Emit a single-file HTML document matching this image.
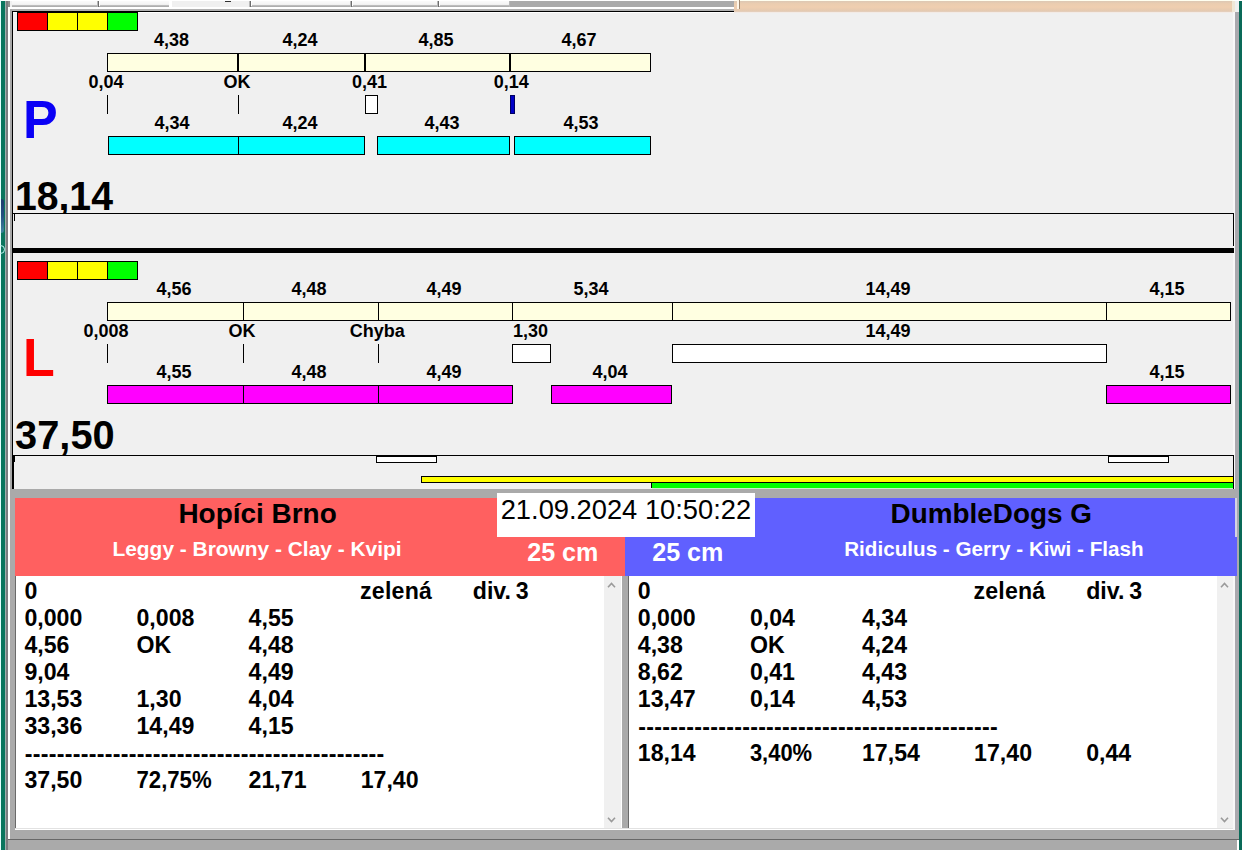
<!DOCTYPE html>
<html><head><meta charset="utf-8"><title>Flyball</title>
<style>
html,body{margin:0;padding:0;}
body{width:1242px;height:850px;overflow:hidden;background:#f0f0f0;position:relative;font-family:"Liberation Sans",sans-serif;}
.a{position:absolute;box-sizing:border-box;}
.t{white-space:pre;}
</style></head><body>
<div class="a" style="left:0px;top:0px;width:1242px;height:1px;background:#ffffff;"></div>
<div class="a" style="left:734px;top:0px;width:499px;height:1px;background:#fffff0;"></div>
<div class="a" style="left:12px;top:1px;width:498px;height:5px;background:linear-gradient(#fafafa,#f4f4f4 60%,#e6e6e6);"></div>
<div class="a" style="left:12px;top:5px;width:498px;height:2px;background:linear-gradient(#c4c4c4,#a6a6a6);"></div>
<div class="a" style="left:170px;top:1px;width:80px;height:6px;background:#f0f0f0;"></div>
<div class="a" style="left:169px;top:1px;width:3px;height:6px;background:#ffffff;"></div>
<div class="a" style="left:225px;top:1px;width:6px;height:1px;background:#303030;"></div>
<div class="a" style="left:97px;top:1px;width:1px;height:6px;background:#b8b8b8;"></div>
<div class="a" style="left:98px;top:1px;width:1px;height:6px;background:#6c6c6c;"></div>
<div class="a" style="left:99px;top:1px;width:1px;height:5px;background:#ffffff;"></div>
<div class="a" style="left:249px;top:1px;width:1px;height:6px;background:#b8b8b8;"></div>
<div class="a" style="left:250px;top:1px;width:1px;height:6px;background:#6c6c6c;"></div>
<div class="a" style="left:251px;top:1px;width:1px;height:5px;background:#ffffff;"></div>
<div class="a" style="left:350px;top:1px;width:1px;height:6px;background:#b8b8b8;"></div>
<div class="a" style="left:351px;top:1px;width:1px;height:6px;background:#6c6c6c;"></div>
<div class="a" style="left:352px;top:1px;width:1px;height:5px;background:#ffffff;"></div>
<div class="a" style="left:437px;top:1px;width:1px;height:6px;background:#b8b8b8;"></div>
<div class="a" style="left:438px;top:1px;width:1px;height:6px;background:#6c6c6c;"></div>
<div class="a" style="left:439px;top:1px;width:1px;height:5px;background:#ffffff;"></div>
<div class="a" style="left:509px;top:1px;width:1px;height:6px;background:#b8b8b8;"></div>
<div class="a" style="left:510px;top:1px;width:1px;height:6px;background:#6c6c6c;"></div>
<div class="a" style="left:511px;top:1px;width:1px;height:5px;background:#ffffff;"></div>
<div class="a" style="left:510px;top:1px;width:224px;height:6px;background:#aaaaaa;"></div>
<div class="a" style="left:8px;top:7px;width:726px;height:2px;background:#ffffff;"></div>
<div class="a" style="left:10px;top:9px;width:724px;height:2px;background:#b0b0b0;"></div>
<div class="a" style="left:12px;top:11px;width:722px;height:1px;background:#000000;"></div>
<div class="a" style="left:13px;top:12px;width:721px;height:1px;background:#ffffff;"></div>
<div class="a" style="left:734px;top:1px;width:499px;height:11px;background:linear-gradient(#dcc8b4 0%,#ebcdb0 25%,#efcfb0 55%,#e6cab0 85%,#e4d0c0 100%);"></div>
<div class="a" style="left:734px;top:12px;width:499px;height:1px;background:#f3ebe6;"></div>
<div class="a" style="left:737px;top:0px;width:2px;height:9px;background:#fff6e8;"></div>
<div class="a" style="left:739px;top:0px;width:1px;height:9px;background:#a08870;"></div>
<div class="a" style="left:1232px;top:1px;width:3px;height:11px;background:#f0e8d8;"></div>
<div class="a" style="left:0px;top:0px;width:1px;height:850px;background:#e6ffff;"></div>
<div class="a" style="left:1px;top:1px;width:4px;height:849px;background:#0a755e;"></div>
<div class="a" style="left:5px;top:1px;width:1px;height:849px;background:#9fb0ae;"></div>
<div class="a" style="left:6px;top:1px;width:2px;height:849px;background:#7c7c80;"></div>
<div class="a" style="left:8px;top:7px;width:2px;height:832px;background:#ffffff;"></div>
<div class="a" style="left:8px;top:1px;width:2px;height:6px;background:#909090;"></div>
<div class="a" style="left:10px;top:9px;width:2px;height:480px;background:#a8a8a8;"></div>
<div class="a" style="left:12px;top:11px;width:1px;height:478px;background:#000000;"></div>
<div class="a" style="left:1px;top:199px;width:3px;height:34px;background:linear-gradient(#22306e,#2a4a88 50%,#4a88a8);border-radius:0 3px 3px 0;opacity:.85;"></div>
<div class="a" style="left:-4px;top:245px;width:9px;height:9px;border:1px solid #bff4f0;border-radius:50%;"></div>
<div class="a" style="left:1233px;top:12px;width:2px;height:838px;background:#f8f8f8;"></div>
<div class="a" style="left:1235px;top:12px;width:4px;height:838px;background:#a9a9ae;"></div>
<div class="a" style="left:1239px;top:1px;width:3px;height:849px;background:#0a6a58;"></div>
<div class="a" style="left:17px;top:12px;width:121px;height:19px;background:#000;"></div>
<div class="a" style="left:18px;top:13px;width:29px;height:17px;background:#ff0000;"></div>
<div class="a" style="left:48px;top:13px;width:29px;height:17px;background:#ffff00;"></div>
<div class="a" style="left:78px;top:13px;width:29px;height:17px;background:#ffff00;"></div>
<div class="a" style="left:108px;top:13px;width:29px;height:17px;background:#00ff00;"></div>
<div class="a" style="left:107px;top:53px;width:544px;height:19px;background:#ffffe1;border:1px solid #000;"></div>
<div class="a" style="left:237px;top:53px;width:2px;height:19px;background:#000;"></div>
<div class="a" style="left:364px;top:53px;width:2px;height:19px;background:#000;"></div>
<div class="a" style="left:509px;top:53px;width:2px;height:19px;background:#000;"></div>
<div class="a" style="left:107px;top:95px;width:1px;height:19px;background:#000;"></div>
<div class="a" style="left:238px;top:95px;width:1px;height:19px;background:#000;"></div>
<div class="a" style="left:365px;top:95px;width:13px;height:19px;background:#fff;border:1px solid #000;"></div>
<div class="a" style="left:510px;top:95px;width:5px;height:19px;background:#0000c8;border:1px solid #000060;"></div>
<div class="a" style="left:108px;top:136px;width:257px;height:19px;background:#00ffff;border:1px solid #000;"></div>
<div class="a" style="left:238px;top:136px;width:1px;height:19px;background:#000;"></div>
<div class="a" style="left:377px;top:136px;width:133px;height:19px;background:#00ffff;border:1px solid #000;"></div>
<div class="a" style="left:514px;top:136px;width:137px;height:19px;background:#00ffff;border:1px solid #000;"></div>
<div class="a" style="left:13px;top:213px;width:1221px;height:1px;background:#000;"></div>
<div class="a" style="left:1233px;top:213px;width:1px;height:33px;background:#000;"></div>
<div class="a" style="left:14px;top:214px;width:1px;height:7px;background:#000;"></div>
<div class="a" style="left:13px;top:248px;width:1221px;height:5px;background:#000;"></div>
<div class="a" style="left:17px;top:261px;width:121px;height:19px;background:#000;"></div>
<div class="a" style="left:18px;top:262px;width:29px;height:17px;background:#ff0000;"></div>
<div class="a" style="left:48px;top:262px;width:29px;height:17px;background:#ffff00;"></div>
<div class="a" style="left:78px;top:262px;width:29px;height:17px;background:#ffff00;"></div>
<div class="a" style="left:108px;top:262px;width:29px;height:17px;background:#00ff00;"></div>
<div class="a" style="left:107px;top:302px;width:1124px;height:19px;background:#ffffe1;border:1px solid #000;"></div>
<div class="a" style="left:243px;top:302px;width:1px;height:19px;background:#000;"></div>
<div class="a" style="left:378px;top:302px;width:1px;height:19px;background:#000;"></div>
<div class="a" style="left:512px;top:302px;width:1px;height:19px;background:#000;"></div>
<div class="a" style="left:672px;top:302px;width:1px;height:19px;background:#000;"></div>
<div class="a" style="left:1106px;top:302px;width:1px;height:19px;background:#000;"></div>
<div class="a" style="left:107px;top:344px;width:1px;height:19px;background:#000;"></div>
<div class="a" style="left:243px;top:344px;width:1px;height:19px;background:#000;"></div>
<div class="a" style="left:378px;top:344px;width:1px;height:19px;background:#000;"></div>
<div class="a" style="left:512px;top:344px;width:39px;height:19px;background:#fff;border:1px solid #000;"></div>
<div class="a" style="left:672px;top:344px;width:435px;height:19px;background:#fff;border:1px solid #000;"></div>
<div class="a" style="left:107px;top:385px;width:406px;height:19px;background:#ff00ff;border:1px solid #000;"></div>
<div class="a" style="left:243px;top:385px;width:1px;height:19px;background:#000;"></div>
<div class="a" style="left:378px;top:385px;width:1px;height:19px;background:#000;"></div>
<div class="a" style="left:551px;top:385px;width:121px;height:19px;background:#ff00ff;border:1px solid #000;"></div>
<div class="a" style="left:1106px;top:385px;width:125px;height:19px;background:#ff00ff;border:1px solid #000;"></div>
<div class="a" style="left:13px;top:455px;width:1221px;height:1px;background:#000;"></div>
<div class="a" style="left:13px;top:455px;width:1px;height:34px;background:#000;"></div>
<div class="a" style="left:1233px;top:455px;width:1px;height:34px;background:#000;"></div>
<div class="a" style="left:14px;top:456px;width:1px;height:6px;background:#000;"></div>
<div class="a" style="left:376px;top:455px;width:61px;height:8px;background:#fff;border:1px solid #000;border-top-width:2px;"></div>
<div class="a" style="left:1108px;top:455px;width:61px;height:8px;background:#fff;border:1px solid #000;border-top-width:2px;"></div>
<div class="a" style="left:421px;top:476px;width:813px;height:7px;background:#ffff00;border:1px solid #000;"></div>
<div class="a" style="left:651px;top:482px;width:583px;height:6px;background:#00ff00;border:1px solid #000;border-bottom:none;"></div>
<div class="a" style="left:652px;top:488px;width:581px;height:1px;background:#c8f0c8;"></div>
<div class="a" style="left:8px;top:489px;width:1227px;height:9px;background:#aaaaaa;"></div>
<div class="a" style="left:8px;top:489px;width:2px;height:350px;background:#ffffff;"></div>
<div class="a" style="left:10px;top:489px;width:5px;height:350px;background:#aaaaaa;"></div>
<div class="a" style="left:15px;top:498px;width:610px;height:78px;background:#ff6060;"></div>
<div class="a" style="left:625px;top:498px;width:610px;height:39px;background:#6060ff;"></div>
<div class="a" style="left:625px;top:537px;width:612px;height:39px;background:#6060ff;"></div>
<div class="a" style="left:1235px;top:498px;width:2px;height:39px;background:#d4d4e4;"></div>
<div class="a" style="left:497px;top:493px;width:258px;height:44px;background:#ffffff;"></div>
<div class="a" style="left:15px;top:576px;width:607px;height:252px;background:#ffffff;"></div>
<div class="a" style="left:15px;top:576px;width:1px;height:252px;background:#6a6a6a;"></div>
<div class="a" style="left:604px;top:576px;width:17px;height:252px;background:#f0f0f0;"></div>
<div class="a" style="left:622px;top:576px;width:6px;height:263px;background:#aaaaaa;"></div>
<div class="a" style="left:628px;top:576px;width:1px;height:252px;background:#6a6a6a;"></div>
<div class="a" style="left:629px;top:576px;width:604px;height:252px;background:#ffffff;"></div>
<div class="a" style="left:1217px;top:576px;width:16px;height:252px;background:#f0f0f0;"></div>
<svg class="a" style="left:0;top:0" width="1242" height="850"><path d="M608.0 587.3 L611.5 583.5 L615.0 587.3" fill="none" stroke="#9a9a9a" stroke-width="1.6"/></svg>
<svg class="a" style="left:0;top:0" width="1242" height="850"><path d="M608.0 817.8 L611.5 821.5999999999999 L615.0 817.8" fill="none" stroke="#9a9a9a" stroke-width="1.6"/></svg>
<svg class="a" style="left:0;top:0" width="1242" height="850"><path d="M1221.0 587.3 L1224.5 583.5 L1228.0 587.3" fill="none" stroke="#9a9a9a" stroke-width="1.6"/></svg>
<svg class="a" style="left:0;top:0" width="1242" height="850"><path d="M1221.0 817.8 L1224.5 821.5999999999999 L1228.0 817.8" fill="none" stroke="#9a9a9a" stroke-width="1.6"/></svg>
<div class="a" style="left:15px;top:828px;width:1218px;height:1px;background:#e2e2e2;"></div>
<div class="a" style="left:15px;top:829px;width:1218px;height:1px;background:#ffffff;"></div>
<div class="a" style="left:10px;top:830px;width:1229px;height:9px;background:#aaaaaa;"></div>
<div class="a" style="left:8px;top:839px;width:1231px;height:1px;background:#686868;"></div>
<div class="a" style="left:8px;top:840px;width:1231px;height:10px;background:#aaaaaa;"></div>
<div class="a" style="left:1237px;top:840px;width:2px;height:10px;background:#ffffff;"></div>
<svg class="a" style="left:0;top:0" width="1242" height="850" font-family="Liberation Sans, sans-serif" xml:space="preserve">
<text x="171.40" y="46.00" font-size="18.0" fill="#000" font-weight="bold" text-anchor="middle" >4,38</text>
<text x="299.90" y="46.00" font-size="18.0" fill="#000" font-weight="bold" text-anchor="middle" >4,24</text>
<text x="435.90" y="46.00" font-size="18.0" fill="#000" font-weight="bold" text-anchor="middle" >4,85</text>
<text x="578.90" y="46.00" font-size="18.0" fill="#000" font-weight="bold" text-anchor="middle" >4,67</text>
<text x="106.10" y="88.00" font-size="18.0" fill="#000" font-weight="bold" text-anchor="middle" >0,04</text>
<text x="236.90" y="88.00" font-size="18.0" fill="#000" font-weight="bold" text-anchor="middle" >OK</text>
<text x="369.60" y="88.00" font-size="18.0" fill="#000" font-weight="bold" text-anchor="middle" >0,41</text>
<text x="511.20" y="88.00" font-size="18.0" fill="#000" font-weight="bold" text-anchor="middle" >0,14</text>
<text x="171.90" y="129.00" font-size="18.0" fill="#000" font-weight="bold" text-anchor="middle" >4,34</text>
<text x="299.90" y="129.00" font-size="18.0" fill="#000" font-weight="bold" text-anchor="middle" >4,24</text>
<text x="441.90" y="129.00" font-size="18.0" fill="#000" font-weight="bold" text-anchor="middle" >4,43</text>
<text x="580.90" y="129.00" font-size="18.0" fill="#000" font-weight="bold" text-anchor="middle" >4,53</text>
<text x="22.90" y="138.00" font-size="52" fill="#0a00f5" font-weight="bold" text-anchor="start"  transform="translate(0 138.00) scale(1 1.03) translate(0 -138.00)">P</text>
<text x="14.90" y="210.00" font-size="39.2" fill="#000" font-weight="bold" text-anchor="start"  transform="translate(0 210.00) scale(1 1.045) translate(0 -210.00)">18,14</text>
<text x="173.90" y="295.00" font-size="18.0" fill="#000" font-weight="bold" text-anchor="middle" >4,56</text>
<text x="308.90" y="295.00" font-size="18.0" fill="#000" font-weight="bold" text-anchor="middle" >4,48</text>
<text x="443.90" y="295.00" font-size="18.0" fill="#000" font-weight="bold" text-anchor="middle" >4,49</text>
<text x="590.90" y="295.00" font-size="18.0" fill="#000" font-weight="bold" text-anchor="middle" >5,34</text>
<text x="887.90" y="295.00" font-size="18.0" fill="#000" font-weight="bold" text-anchor="middle" >14,49</text>
<text x="1166.90" y="295.00" font-size="18.0" fill="#000" font-weight="bold" text-anchor="middle" >4,15</text>
<text x="106.10" y="337.00" font-size="18.0" fill="#000" font-weight="bold" text-anchor="middle" >0,008</text>
<text x="241.90" y="337.00" font-size="18.0" fill="#000" font-weight="bold" text-anchor="middle" >OK</text>
<text x="377.20" y="337.00" font-size="18.0" fill="#000" font-weight="bold" text-anchor="middle" >Chyba</text>
<text x="530.40" y="337.00" font-size="18.0" fill="#000" font-weight="bold" text-anchor="middle" >1,30</text>
<text x="887.90" y="337.00" font-size="18.0" fill="#000" font-weight="bold" text-anchor="middle" >14,49</text>
<text x="173.90" y="378.00" font-size="18.0" fill="#000" font-weight="bold" text-anchor="middle" >4,55</text>
<text x="308.90" y="378.00" font-size="18.0" fill="#000" font-weight="bold" text-anchor="middle" >4,48</text>
<text x="443.90" y="378.00" font-size="18.0" fill="#000" font-weight="bold" text-anchor="middle" >4,49</text>
<text x="609.90" y="378.00" font-size="18.0" fill="#000" font-weight="bold" text-anchor="middle" >4,04</text>
<text x="1166.90" y="378.00" font-size="18.0" fill="#000" font-weight="bold" text-anchor="middle" >4,15</text>
<text x="23.10" y="376.00" font-size="52" fill="#ff0000" font-weight="bold" text-anchor="start"  transform="translate(0 376.00) scale(1 1.03) translate(0 -376.00)">L</text>
<text x="15.10" y="449.00" font-size="39.8" fill="#000" font-weight="bold" text-anchor="start"  transform="translate(0 449.00) scale(1 1.03) translate(0 -449.00)">37,50</text>
<text x="500.70" y="519.00" font-size="27.3" fill="#000" font-weight="normal" text-anchor="start" >21.09.2024 10:50:22</text>
<text x="257.60" y="522.50" font-size="27.95" fill="#000" font-weight="bold" text-anchor="middle" >Hopíci Brno</text>
<text x="991.30" y="523.20" font-size="27.9" fill="#000" font-weight="bold" text-anchor="middle" >DumbleDogs G</text>
<text x="257.00" y="555.60" font-size="20.9" fill="#fff" font-weight="bold" text-anchor="middle" >Leggy - Browny - Clay - Kvipi</text>
<text x="993.90" y="555.60" font-size="20.65" fill="#fff" font-weight="bold" text-anchor="middle" >Ridiculus - Gerry - Kiwi - Flash</text>
<text x="562.80" y="561.00" font-size="25.1" fill="#fff" font-weight="bold" text-anchor="middle" >25 cm</text>
<text x="687.80" y="561.00" font-size="25.1" fill="#fff" font-weight="bold" text-anchor="middle" >25 cm</text>
<text x="24.40" y="599.00" font-size="23.15" fill="#000" font-weight="bold" text-anchor="start" >0</text>
<text x="360.10" y="599.00" font-size="23.15" fill="#000" font-weight="bold" text-anchor="start" letter-spacing="0.2" >zelená</text>
<text x="472.80" y="599.00" font-size="23.15" fill="#000" font-weight="bold" text-anchor="start" word-spacing="-1.6">div. 3</text>
<text x="24.40" y="626.05" font-size="23.15" fill="#000" font-weight="bold" text-anchor="start" >0,000</text>
<text x="136.50" y="626.05" font-size="23.15" fill="#000" font-weight="bold" text-anchor="start" >0,008</text>
<text x="248.60" y="626.05" font-size="23.15" fill="#000" font-weight="bold" text-anchor="start" >4,55</text>
<text x="24.40" y="653.10" font-size="23.15" fill="#000" font-weight="bold" text-anchor="start" >4,56</text>
<text x="136.50" y="653.10" font-size="23.15" fill="#000" font-weight="bold" text-anchor="start" >OK</text>
<text x="248.60" y="653.10" font-size="23.15" fill="#000" font-weight="bold" text-anchor="start" >4,48</text>
<text x="24.40" y="680.15" font-size="23.15" fill="#000" font-weight="bold" text-anchor="start" >9,04</text>
<text x="248.60" y="680.15" font-size="23.15" fill="#000" font-weight="bold" text-anchor="start" >4,49</text>
<text x="24.40" y="707.20" font-size="23.15" fill="#000" font-weight="bold" text-anchor="start" >13,53</text>
<text x="136.50" y="707.20" font-size="23.15" fill="#000" font-weight="bold" text-anchor="start" >1,30</text>
<text x="248.60" y="707.20" font-size="23.15" fill="#000" font-weight="bold" text-anchor="start" >4,04</text>
<text x="24.40" y="734.25" font-size="23.15" fill="#000" font-weight="bold" text-anchor="start" >33,36</text>
<text x="136.50" y="734.25" font-size="23.15" fill="#000" font-weight="bold" text-anchor="start" >14,49</text>
<text x="248.60" y="734.25" font-size="23.15" fill="#000" font-weight="bold" text-anchor="start" >4,15</text>
<text x="24.80" y="762.30" font-size="23.15" fill="#000" font-weight="bold" text-anchor="start" letter-spacing="0.29" >---------------------------------------------</text>
<text x="24.40" y="788.35" font-size="23.15" fill="#000" font-weight="bold" text-anchor="start" >37,50</text>
<text x="136.50" y="788.35" font-size="23.15" fill="#000" font-weight="bold" text-anchor="start" textLength="75.1" lengthAdjust="spacingAndGlyphs">72,75%</text>
<text x="248.60" y="788.35" font-size="23.15" fill="#000" font-weight="bold" text-anchor="start" >21,71</text>
<text x="360.70" y="788.35" font-size="23.15" fill="#000" font-weight="bold" text-anchor="start" >17,40</text>
<text x="637.80" y="599.00" font-size="23.15" fill="#000" font-weight="bold" text-anchor="start" >0</text>
<text x="973.50" y="599.00" font-size="23.15" fill="#000" font-weight="bold" text-anchor="start" letter-spacing="0.2" >zelená</text>
<text x="1086.20" y="599.00" font-size="23.15" fill="#000" font-weight="bold" text-anchor="start" word-spacing="-1.6">div. 3</text>
<text x="637.80" y="626.05" font-size="23.15" fill="#000" font-weight="bold" text-anchor="start" >0,000</text>
<text x="749.90" y="626.05" font-size="23.15" fill="#000" font-weight="bold" text-anchor="start" >0,04</text>
<text x="862.00" y="626.05" font-size="23.15" fill="#000" font-weight="bold" text-anchor="start" >4,34</text>
<text x="637.80" y="653.10" font-size="23.15" fill="#000" font-weight="bold" text-anchor="start" >4,38</text>
<text x="749.90" y="653.10" font-size="23.15" fill="#000" font-weight="bold" text-anchor="start" >OK</text>
<text x="862.00" y="653.10" font-size="23.15" fill="#000" font-weight="bold" text-anchor="start" >4,24</text>
<text x="637.80" y="680.15" font-size="23.15" fill="#000" font-weight="bold" text-anchor="start" >8,62</text>
<text x="749.90" y="680.15" font-size="23.15" fill="#000" font-weight="bold" text-anchor="start" >0,41</text>
<text x="862.00" y="680.15" font-size="23.15" fill="#000" font-weight="bold" text-anchor="start" >4,43</text>
<text x="637.80" y="707.20" font-size="23.15" fill="#000" font-weight="bold" text-anchor="start" >13,47</text>
<text x="749.90" y="707.20" font-size="23.15" fill="#000" font-weight="bold" text-anchor="start" >0,14</text>
<text x="862.00" y="707.20" font-size="23.15" fill="#000" font-weight="bold" text-anchor="start" >4,53</text>
<text x="638.20" y="735.25" font-size="23.15" fill="#000" font-weight="bold" text-anchor="start" letter-spacing="0.29" >---------------------------------------------</text>
<text x="637.80" y="761.30" font-size="23.15" fill="#000" font-weight="bold" text-anchor="start" >18,14</text>
<text x="749.90" y="761.30" font-size="23.15" fill="#000" font-weight="bold" text-anchor="start" textLength="62.2" lengthAdjust="spacingAndGlyphs">3,40%</text>
<text x="862.00" y="761.30" font-size="23.15" fill="#000" font-weight="bold" text-anchor="start" >17,54</text>
<text x="974.10" y="761.30" font-size="23.15" fill="#000" font-weight="bold" text-anchor="start" >17,40</text>
<text x="1086.20" y="761.30" font-size="23.15" fill="#000" font-weight="bold" text-anchor="start" >0,44</text>
<rect x="15" y="213" width="125" height="1" fill="#000"/><rect x="15" y="214" width="125" height="8" fill="#f0f0f0"/>
<rect x="15" y="455" width="125" height="1" fill="#000"/><rect x="15" y="456" width="125" height="8" fill="#f0f0f0"/>
</svg>
</body></html>
